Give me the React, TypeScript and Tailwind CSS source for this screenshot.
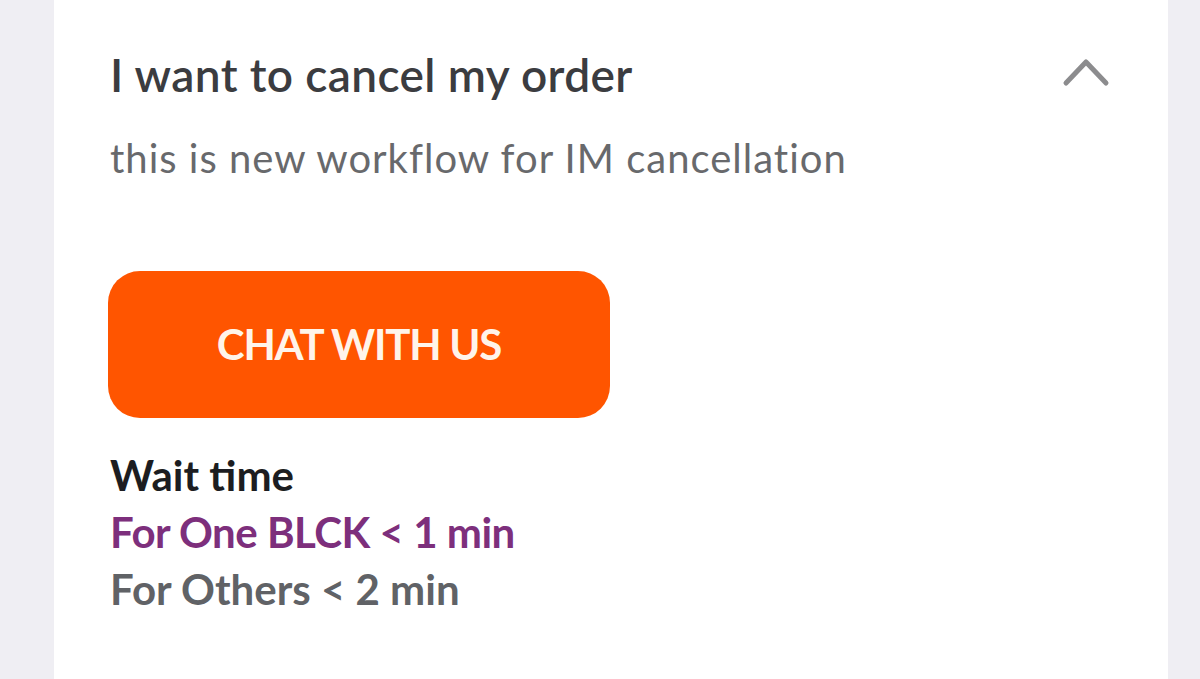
export default function App() {
  return (
    <div
      className="min-h-[679px] h-[679px] w-full bg-[#efeef3] overflow-hidden"
      style={{ fontFamily: "Lato, 'Open Sans', sans-serif" }}
    >
      <div className="ml-[54px] w-[1114px] h-full bg-white pl-[56px] pr-[58px] pt-[48px]">
        <div className="flex items-start justify-between">
          <h1 className="text-[46px] leading-[54px] font-semibold tracking-[0.4px] text-[#3b3c40]">
            I want to cancel my order
          </h1>
          <svg width="48" height="34" viewBox="0 0 48 34" className="mt-[8px]">
            <path
              d="M4 27 L24 6 L44 27"
              fill="none"
              stroke="#8c8c8e"
              strokeWidth="5"
              strokeLinecap="round"
              strokeLinejoin="round"
            />
          </svg>
        </div>
        <p className="mt-[33px] text-[40px] leading-[46px] tracking-[1px] text-[#68696c]">
          this is new workflow for IM cancellation
        </p>
        <button className="mt-[90px] -ml-[2px] w-[502px] h-[147px] rounded-[32px] bg-[#ff5500] text-[#fff4ea] text-[42px] font-bold tracking-[-1.2px]">
          CHAT WITH US
        </button>
        <div className="mt-[29px] flex flex-col text-[42px] leading-[57px] font-bold">
          <span className="text-[#1c1d21]">Wait time</span>
          <span className="text-[#7d2f7c] tracking-[-0.5px]">For One BLCK &lt; 1 min</span>
          <span className="text-[#606266]">For Others &lt; 2 min</span>
        </div>
      </div>
    </div>
  );
}
